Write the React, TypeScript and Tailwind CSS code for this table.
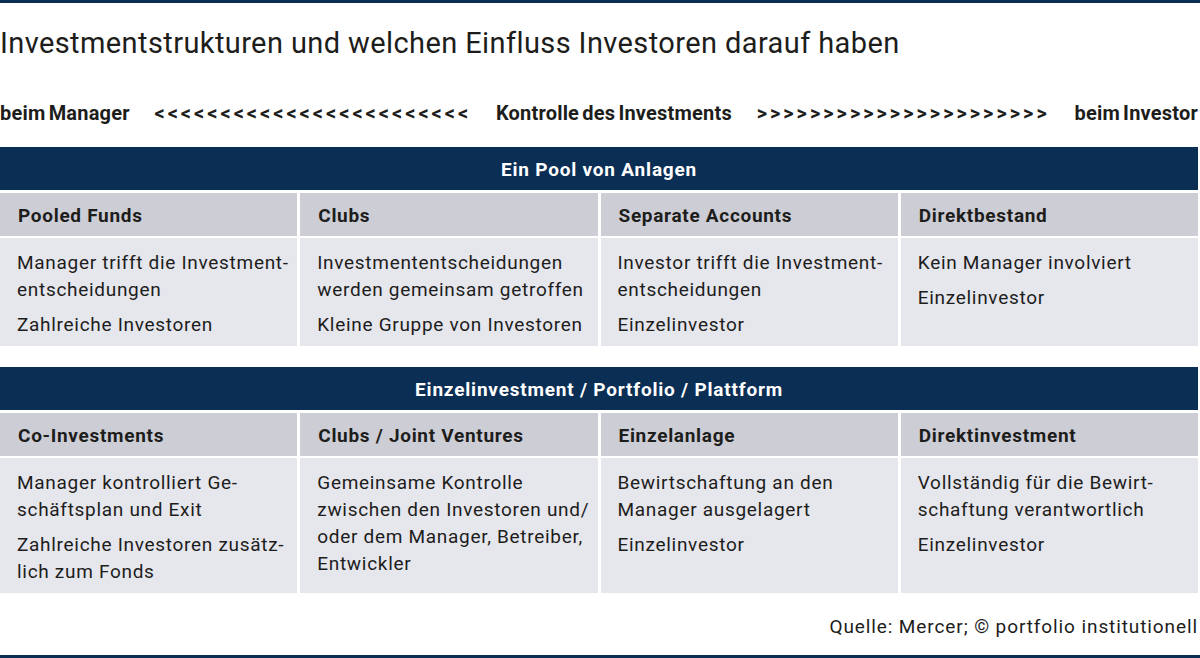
import React from 'react';

type Cell = { title: string; lines: string[][] };

const pool: Cell[] = [
  { title: 'Pooled Funds', lines: [['Manager trifft die Investment-', 'entscheidungen'], ['Zahlreiche Investoren']] },
  { title: 'Clubs', lines: [['Investmententscheidungen', 'werden gemeinsam getroffen'], ['Kleine Gruppe von Investoren']] },
  { title: 'Separate Accounts', lines: [['Investor trifft die Investment-', 'entscheidungen'], ['Einzelinvestor']] },
  { title: 'Direktbestand', lines: [['Kein Manager involviert'], ['Einzelinvestor']] },
];

const single: Cell[] = [
  {
    title: 'Co-Investments',
    lines: [['Manager kontrolliert Ge-', 'schäftsplan und Exit'], ['Zahlreiche Investoren zusätz-', 'lich zum Fonds']],
  },
  {
    title: 'Clubs / Joint Ventures',
    lines: [['Gemeinsame Kontrolle', 'zwischen den Investoren und/', 'oder dem Manager, Betreiber,', 'Entwickler']],
  },
  { title: 'Einzelanlage', lines: [['Bewirtschaftung an den', 'Manager ausgelagert'], ['Einzelinvestor']] },
  { title: 'Direktinvestment', lines: [['Vollständig für die Bewirt-', 'schaftung verantwortlich'], ['Einzelinvestor']] },
];

function Section({ label, cells, bodyH, gapTop }: { label: string; cells: Cell[]; bodyH: string; gapTop: string }) {
  return (
    <div className={`flex flex-col w-[1198px] ${gapTop}`}>
      <div className="h-[43px] bg-[#0b2e55] flex items-center justify-center pt-[3px] text-white font-bold text-[19px] tracking-[0.8px]">
        {label}
      </div>
      <div className="grid grid-cols-4 gap-x-[3px] mt-[3px]">
        {cells.map((c) => (
          <div key={c.title} className="h-[43px] bg-[#cdcdd6] flex items-center pl-[18px] pt-[3px] font-bold text-[19px] tracking-[0.7px]">
            {c.title}
          </div>
        ))}
      </div>
      <div className="grid grid-cols-4 gap-x-[3px] mt-[2px]">
        {cells.map((c) => (
          <div key={c.title} className={`${bodyH} bg-[#e6e6ed] pl-[17px] pt-[11px] flex flex-col gap-[8px] text-[19px] leading-[27px] tracking-[0.7px]`}>
            {c.lines.map((p, i) => (
              <p key={i}>
                {p.map((l, j) => (
                  <React.Fragment key={j}>
                    {l}
                    {j < p.length - 1 && <br />}
                  </React.Fragment>
                ))}
              </p>
            ))}
          </div>
        ))}
      </div>
    </div>
  );
}

export default function App() {
  return (
    <div className="w-[1200px] h-[658px] bg-white flex flex-col text-[#1d1d1b] font-['Roboto',sans-serif] overflow-hidden">
      <div className="h-[3px] bg-[#0b2e55]" />
      <h1 className="mt-[23px] text-[29px] leading-[34px] tracking-[0.4px]">
        Investmentstrukturen und welchen Einfluss Investoren darauf haben
      </h1>
      <div className="mt-[41px] w-[1198px] flex items-center justify-between font-bold text-[20px] leading-[24px]">
        <span className="tracking-[0.2px] [word-spacing:-2px]">beim Manager</span>
        <span className="tracking-[3px]">{'<'.repeat(24)}</span>
        <span className="tracking-[0.2px] [word-spacing:-2px]">Kontrolle des Investments</span>
        <span className="tracking-[3px]">{'>'.repeat(22)}</span>
        <span className="tracking-[0.2px] [word-spacing:-2px]">beim Investor</span>
      </div>
      <Section label="Ein Pool von Anlagen" cells={pool} bodyH="h-[108px]" gapTop="mt-[22px]" />
      <Section label="Einzelinvestment / Portfolio / Plattform" cells={single} bodyH="h-[135px]" gapTop="mt-[21px]" />
      <div className="w-[1198px] text-right text-[19px] leading-[24px] mt-[22px] tracking-[0.9px]">
        Quelle: Mercer; © portfolio institutionell
      </div>
      <div className="flex-1" />
      <div className="h-[3px] bg-[#0b2e55]" />
    </div>
  );
}
